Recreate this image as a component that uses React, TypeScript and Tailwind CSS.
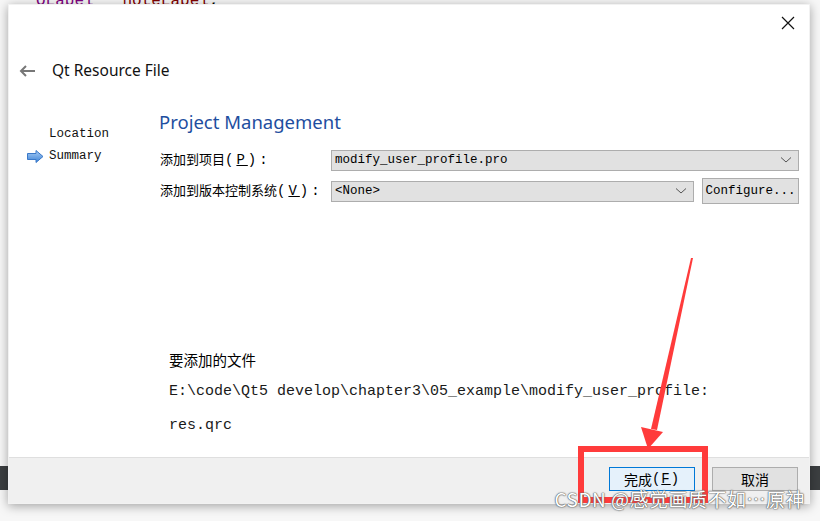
import React from 'react';

const sans = { fontFamily: '"Noto Sans", "Noto Sans CJK SC", sans-serif' };
const cjk = { fontFamily: '"Noto Sans CJK SC", "Noto Sans", sans-serif' };
const mono = { fontFamily: '"Liberation Mono", "Noto Sans CJK SC", monospace' };

const Chevron = () => (
  <svg width="12" height="8" viewBox="0 0 12 8" className="shrink-0">
    <path d="M1 1.5 L6 6 L11 1.5" fill="none" stroke="#555" strokeWidth="1" />
  </svg>
);

const Combo = ({ value }: { value: string }) => (
  <div className="flex-1 h-[21px] flex items-center justify-between bg-[#e1e1e1] border border-[#adadad] pl-[3px] pr-[6px]">
    <span className="text-[12.5px] text-black" style={mono}>{value}</span>
    <Chevron />
  </div>
);

// mnemonic suffix such as (P): rendered wide, like the Qt dialog
const Mnemonic = ({ letter, colon }: { letter: string; colon?: boolean }) => (
  <span className="text-[14px] tracking-[3px]" style={mono}>
    (<span className="underline">{letter}</span>){colon ? ':' : ''}
  </span>
);

const App = () => {
  return (
    <div className="relative w-[820px] h-[521px] overflow-hidden bg-[#f7f7f7]">
      {/* editor behind the dialog */}
      <div className="absolute left-[36px] top-[-11px] text-[16px] whitespace-pre" style={mono}>
        <span className="text-[#800080]">QLabel</span>
        <span className="text-black"> * </span>
        <span className="text-[#800000]">noteLabel</span>
        <span className="text-black">;</span>
      </div>
      <div className="absolute left-0 right-0 top-[466px] h-[24px] bg-[#3c3f41]" />

      {/* dialog */}
      <div className="absolute left-[8px] top-[4px] w-[802px] h-[500px] bg-white flex flex-col border border-[#f2f2f2] shadow-[0_2px_10px_rgba(0,0,0,0.35)]">
        <div className="h-[51px] flex justify-end items-start pt-[11px] pr-[14px]">
          <svg width="14" height="14" viewBox="0 0 14 14">
            <path d="M1 1 L13 13 M13 1 L1 13" stroke="#111" strokeWidth="1.2" />
          </svg>
        </div>

        <div className="h-[30px] flex items-center pl-[10px]">
          <svg width="17" height="12" viewBox="0 0 17 12" className="mr-[16px]">
            <path d="M16 6 H2 M7 1 L2 6 L7 11" fill="none" stroke="#777" strokeWidth="2" />
          </svg>
          <span className="text-[15.5px] text-[#111]" style={sans}>Qt Resource File</span>
        </div>

        <div className="flex-1 flex">
          {/* steps */}
          <div className="w-[150px] pt-[37px] text-[12.5px] text-[#111]" style={mono}>
            <div className="h-[22px] flex items-center pl-[40px]">Location</div>
            <div className="h-[22px] flex items-center pl-[18px]">
              <svg width="17" height="13" viewBox="0 0 17 13" className="mr-[5px]">
                <defs>
                  <linearGradient id="ar" x1="0" y1="0" x2="0" y2="1">
                    <stop offset="0" stopColor="#a9cdf5" />
                    <stop offset="1" stopColor="#3b82d6" />
                  </linearGradient>
                </defs>
                <path d="M0.5 3.5 H9 V0.5 L16 6.5 L9 12.5 V9.5 H0.5 Z" fill="url(#ar)" stroke="#3a78c8" strokeWidth="1" />
              </svg>
              Summary
            </div>
          </div>

          {/* page */}
          <div className="flex-1 flex flex-col pt-[23px] pr-[10px]">
            <div className="h-[26px] flex items-center text-[18.5px] text-[#1e4ea0]" style={sans}>
              Project Management
            </div>
            <div className="mt-[14px] flex items-center">
              <div className="w-[172px] pl-[1px] text-[13px] text-black whitespace-nowrap" style={cjk}>
                添加到项目<Mnemonic letter="P" colon />
              </div>
              <Combo value="modify_user_profile.pro" />
            </div>
            <div className="mt-[7px] flex items-center">
              <div className="w-[172px] pl-[1px] text-[13px] text-black whitespace-nowrap" style={cjk}>
                添加到版本控制系统<Mnemonic letter="V" colon />
              </div>
              <Combo value="<None>" />
              <div className="ml-[8px] w-[97px] h-[26px] flex items-center justify-center bg-[#e1e1e1] border border-[#adadad] text-[12.5px] text-black" style={mono}>
                Configure...
              </div>
            </div>

            <div className="mt-auto pb-[21px] pl-[10px]">
              <div className="h-[20px] flex items-center text-[14.5px] text-black" style={cjk}>要添加的文件</div>
              <div className="mt-[12px] h-[20px] flex items-center text-[15px] text-[#1a1a1a] whitespace-pre" style={{ fontFamily: '"Liberation Mono", monospace' }}>
                E:\code\Qt5 develop\chapter3\05_example\modify_user_profile:
              </div>
              <div className="mt-[14px] h-[20px] flex items-center text-[15px] text-[#1a1a1a]" style={{ fontFamily: '"Liberation Mono", monospace' }}>
                res.qrc
              </div>
            </div>
          </div>
        </div>

        {/* footer */}
        <div className="h-[46px] shrink-0 bg-[#f0f0f0] border-t border-[#dfdfdf] flex justify-end items-start pt-[9px] pr-[11px] gap-[17px]">
          <div className="w-[86px] h-[24px] flex items-center justify-center bg-[#e5f1fb] border border-[#0078d7] text-[14px] text-black whitespace-nowrap" style={cjk}>
            完成<span className="tracking-[1px]" style={mono}>(<span className="underline">F</span>)</span>
          </div>
          <div className="w-[86px] h-[24px] flex items-center justify-center bg-[#e1e1e1] border border-[#adadad] text-[14px] text-black" style={cjk}>
            取消
          </div>
        </div>
      </div>

      {/* red annotation */}
      <svg className="absolute inset-0 pointer-events-none" width="820" height="521" viewBox="0 0 820 521">
        <polygon points="691,258 693,258 657,430 651,429" fill="#ff3b3b" />
        <polygon points="641,427 663,432 648,449" fill="#ff3b3b" />
        <rect x="581" y="449" width="124" height="51" fill="none" stroke="#ff3b3b" strokeWidth="6" />
      </svg>

      {/* watermark */}
      <div
        className="absolute right-[15px] top-[485px] text-[19px] tracking-[0.5px] text-white whitespace-nowrap [text-shadow:0_0_1px_#555,0_0_1px_#555,0_0_2px_#777]"
        style={cjk}
      >
        CSDN @感觉画质不如…原神
      </div>
    </div>
  );
};

export default App;
